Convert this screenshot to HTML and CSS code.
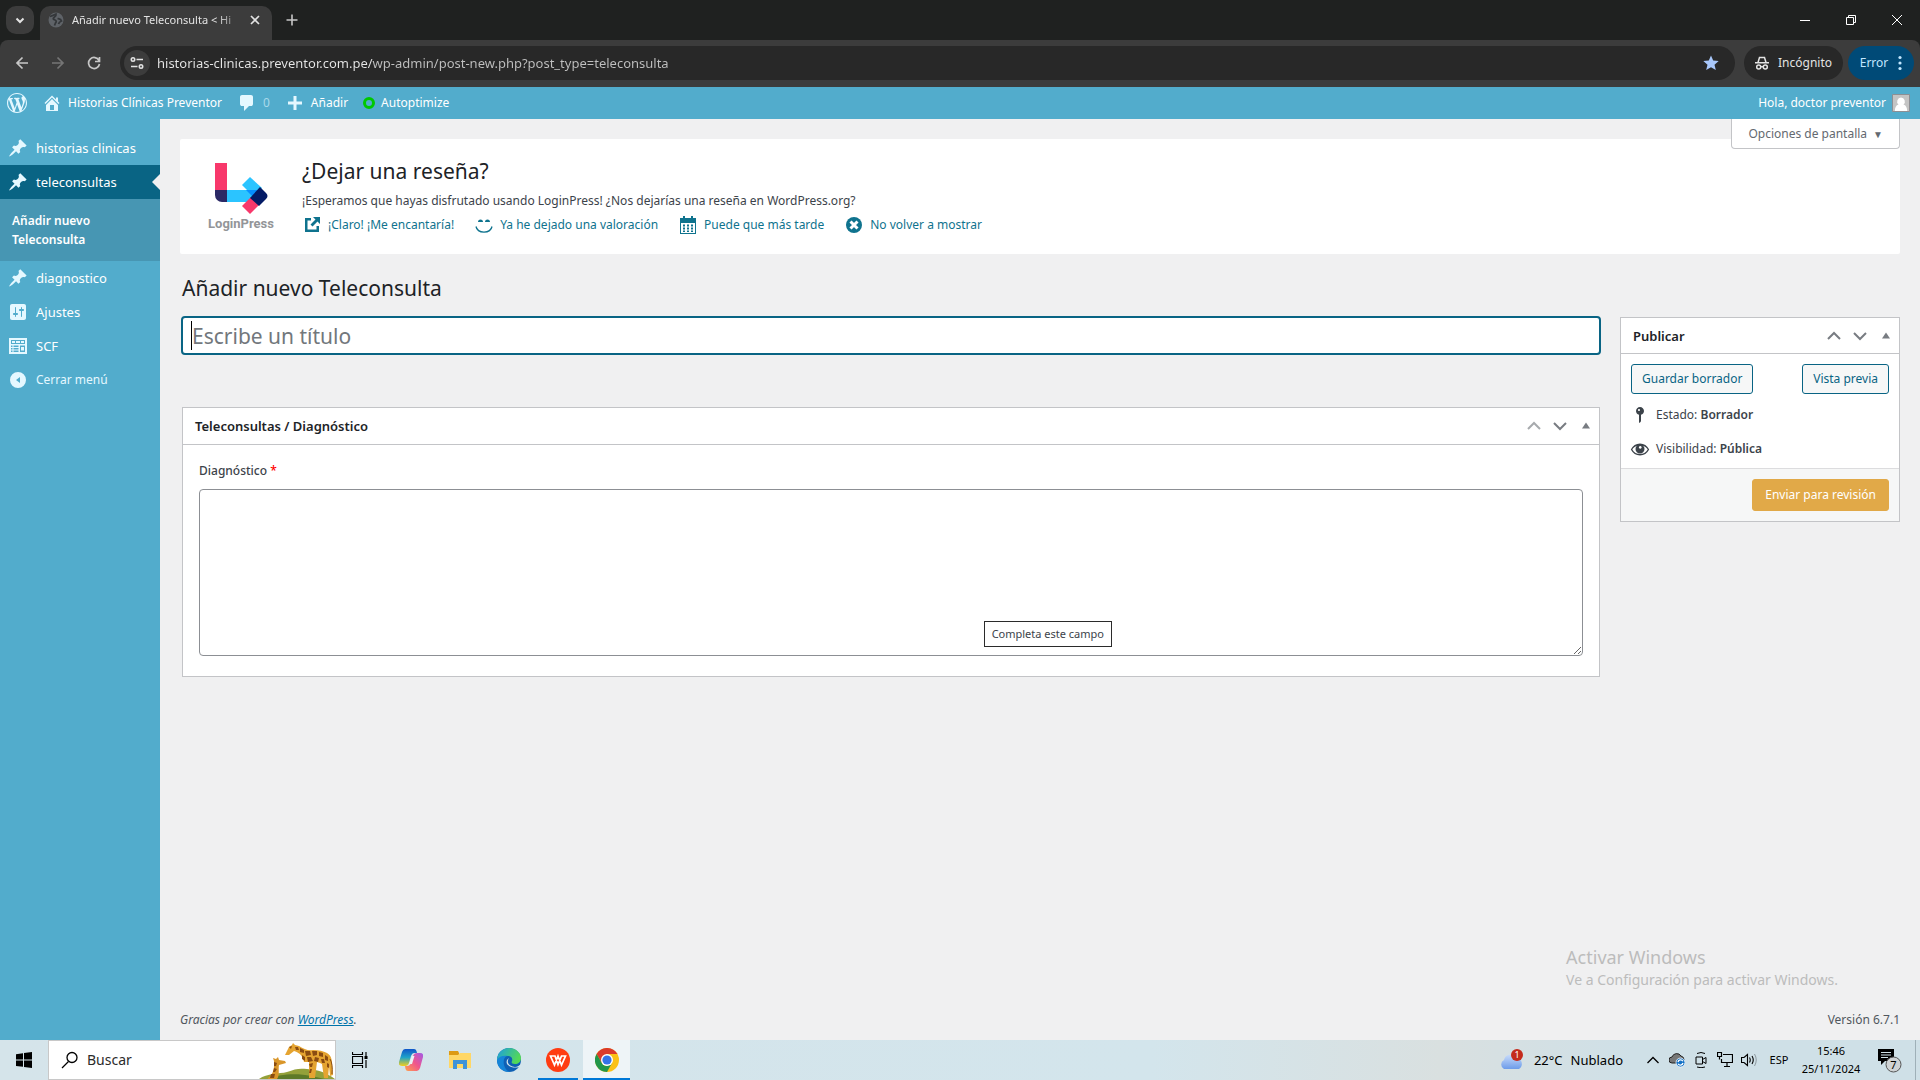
FILE: index.html
```html
<!DOCTYPE html>
<html lang="es">
<head>
    <meta charset="UTF-8">
    <meta name="viewport" content="width=device-width, initial-scale=1.0">
    <title>Añadir nuevo Teleconsulta</title>
    <link rel="stylesheet" href="styles.css">
</head>
<body>
    <!-- shared icons -->
    <svg class="sprite" aria-hidden="true">
        <symbol id="pin" viewBox="0 0 20 20"><path d="M10.44 3.02l1.82-1.82 6.36 6.35-1.83 1.82c-1.05-.68-2.48-.57-3.41.36l-.75.75c-.92.93-1.04 2.35-.35 3.41l-1.83 1.82-2.41-2.41-2.8 2.79c-.42.42-3.38 2.71-3.8 2.29s1.86-3.39 2.28-3.81l2.79-2.79L4.1 9.36l1.83-1.82c1.05.69 2.48.57 3.4-.36l.75-.75c.93-.92 1.05-2.35.36-3.41z"/></symbol>
        <symbol id="up" viewBox="0 0 20 20"><path d="M4 13l6-6 6 6" fill="none" stroke="currentColor" stroke-width="2"/></symbol>
        <symbol id="down" viewBox="0 0 20 20"><path d="M4 7l6 6 6-6" fill="none" stroke="currentColor" stroke-width="2"/></symbol>
        <symbol id="toggle" viewBox="0 0 20 20"><path d="M6 12.500L10 6.500l4 6z"/></symbol>
    </svg>

    <header class="browser">
        <div class="tabs">
            <button class="tab-search" aria-label="Buscar pestañas"><svg width="12" height="12" viewBox="0 0 12 12"><path d="M2.500 4.500L6 8l3.500-3.500" fill="none" stroke="currentColor" stroke-width="2"/></svg></button>
            <div class="tab">
                <svg width="16" height="16" viewBox="0 0 16 16"><circle cx="8" cy="8" r="7.500" fill="#5f6368"/><path d="M2 4.500c2-.5 4-1.500 6-2.500.5 2-.5 2.500-2 3.500s-.5 2 1 2.500 1.500 2 .5 3l-1 2.500M9.500 6.500c2 .5 3.500.5 4 2.500-1.500.5-2.500 1-3 3" fill="none" stroke="#34373a" stroke-width="1.800"/></svg>
                <span class="tab-title">Añadir nuevo Teleconsulta &lt; Hi</span>
                <button class="tab-close" aria-label="Cerrar"><svg width="10" height="10" viewBox="0 0 10 10"><path d="M1 1l8 8M9 1L1 9" stroke="currentColor" stroke-width="1.700"/></svg></button>
            </div>
            <button class="tab-new" aria-label="Nueva pestaña"><svg width="12" height="12" viewBox="0 0 12 12"><path d="M6 .5v11M.5 6h11" stroke="currentColor" stroke-width="1.600"/></svg></button>
            <div class="window-buttons">
                <button aria-label="Minimizar"><svg width="10" height="10" viewBox="0 0 10 10"><path d="M0 5.500h10" stroke="#fff"/></svg></button>
                <button aria-label="Restaurar"><svg width="10" height="10" viewBox="0 0 10 10"><path d="M.5 2.500h7v7h-7zM2.500 2.500v-2h7v7h-2" fill="none" stroke="#fff"/></svg></button>
                <button aria-label="Cerrar ventana"><svg width="10" height="10" viewBox="0 0 10 10"><path d="M0 0l10 10M10 0L0 10" stroke="#fff"/></svg></button>
            </div>
        </div>
        <div class="toolbar">
            <button class="nav-button" aria-label="Atrás"><svg width="14" height="14" viewBox="0 0 14 14"><path d="M7.500 1.500L2 7l5.500 5.500M2 7h11" fill="none" stroke="currentColor" stroke-width="1.700"/></svg></button>
            <button class="nav-button off" aria-label="Adelante"><svg width="14" height="14" viewBox="0 0 14 14"><path d="M6.500 1.500L12 7l-5.500 5.500M12 7H1" fill="none" stroke="currentColor" stroke-width="1.700"/></svg></button>
            <button class="nav-button" aria-label="Recargar"><svg width="14" height="14" viewBox="0 0 14 14"><path d="M12 4.500A5.500 5.500 0 1 0 12.500 8M12.500 1v4.500H8" fill="none" stroke="currentColor" stroke-width="1.700"/></svg></button>
            <div class="omnibox">
                <button class="site-info" aria-label="Información del sitio"><svg width="14" height="14" viewBox="0 0 14 14" fill="none" stroke="#e3e3e3" stroke-width="1.600"><circle cx="3" cy="3.500" r="1.700"/><path d="M6.500 3.500H13M1 10.500h6.500"/><circle cx="11" cy="10.500" r="1.700"/></svg></button>
                <input class="url" type="text" aria-label="Dirección" value="historias-clinicas.preventor.com.pe/wp-admin/post-new.php?post_type=teleconsulta">
                <button class="star" aria-label="Favorito"><svg width="16" height="16" viewBox="0 0 16 16"><path d="M8 .5l2.200 5.100 5.500.5-4.200 3.600 1.300 5.400L8 12.200l-4.800 2.900 1.300-5.400L.3 6.100l5.500-.5z" fill="#a8c7fa"/></svg></button>
            </div>
            <button class="pill incognito"><svg width="14" height="14" viewBox="0 0 14 14" fill="none" stroke="#e3e3e3" stroke-width="1.500"><path d="M0 6.800h14M3 6.500L4.500 1.500h5L11 6.500"/><circle cx="3.700" cy="11" r="2"/><circle cx="10.300" cy="11" r="2"/><path d="M5.700 10.700h2.600"/></svg>Incógnito</button>
            <button class="pill error">Error<svg width="4" height="16" viewBox="0 0 4 16" fill="#c2e7ff"><circle cx="2" cy="2.500" r="1.600"/><circle cx="2" cy="8" r="1.600"/><circle cx="2" cy="13.500" r="1.600"/></svg></button>
        </div>
    </header>

    <nav class="admin-bar">
        <a href="#" aria-label="WordPress"><svg width="20" height="20" viewBox="0 0 20 20"><path d="M20 10c0-5.510-4.490-10-10-10C4.480 0 0 4.490 0 10c0 5.520 4.480 10 10 10 5.510 0 10-4.480 10-10zM7.780 15.370L4.370 6.220c.55-.02 1.170-.08 1.170-.08.5-.06.44-1.130-.06-1.110 0 0-1.450.11-2.370.11-.18 0-.37 0-.58-.01C4.120 2.690 6.870 1.110 10 1.110c2.330 0 4.450.87 6.050 2.340-.68-.11-1.650.39-1.650 1.580 0 .74.45 1.360.9 2.100.35.61.55 1.360.55 2.460 0 1.490-1.400 5-1.400 5l-3.030-8.370c.54-.02.82-.17.82-.17.5-.05.44-1.250-.06-1.220 0 0-1.440.12-2.380.12-.87 0-2.330-.12-2.330-.12-.5-.03-.56 1.200-.06 1.220l.92.08 1.260 3.410zM17.410 10c.24-.64.74-1.870.43-4.250.7 1.290 1.050 2.710 1.050 4.250 0 3.290-1.730 6.240-4.400 7.780.97-2.590 1.940-5.200 2.920-7.780zM6.100 18.090C3.120 16.650 1.110 13.530 1.110 10c0-1.300.23-2.480.72-3.590C3.250 10.300 4.670 14.200 6.100 18.090zm4.030-6.630l2.580 6.980c-.86.29-1.760.45-2.710.45-.79 0-1.570-.11-2.290-.33.81-2.380 1.620-4.740 2.420-7.100z"/></svg></a>
        <a href="#" class="site-name"><svg width="20" height="20" viewBox="0 0 20 20"><path d="M16 8.500l1.530 1.530-1.060 1.060L10 4.600l-6.470 6.490-1.060-1.060L10 2.500l4 4v-2h2v4zm-6-2.460l6 5.990V18H4v-5.970zM12 17v-5H8v5h4z"/></svg>Historias Clínicas Preventor</a>
        <a href="#" class="comments"><svg width="20" height="20" viewBox="0 0 20 20"><path d="M5 2h9q.82 0 1.410.59T16 4v7q0 .82-.59 1.410T14 13h-2l-5 5v-5H5q-.82 0-1.410-.59T3 11V4q0-.82.59-1.410T5 2z"/></svg><span>0</span></a>
        <a href="#"><svg width="20" height="20" viewBox="0 0 20 20"><path d="M17 8.500v3h-5.500V17h-3v-5.500H3v-3h5.500V3h3v5.500z"/></svg>Añadir</a>
        <a href="#" class="autoptimize"><i class="ring"></i>Autoptimize</a>
        <a href="#" class="account">Hola, doctor preventor<svg width="18" height="18" viewBox="0 0 18 18"><path d="M.5.5h17v17H.5z" fill="#c4c4c4" stroke="#8c8f94"/><path d="M9 3.500a4 4 0 0 1 2.500 7c2.500.7 3.500 3 3.700 6.500H2.800c.2-3.500 1.200-5.800 3.700-6.500A4 4 0 0 1 9 3.500z" fill="#fff"/></svg></a>
    </nav>

    <div class="admin">
        <aside class="menu">
            <a href="#"><svg><use href="#pin"/></svg>historias clinicas</a>
            <a href="#" class="current"><svg><use href="#pin"/></svg>teleconsultas</a>
            <div class="submenu"><a href="#">Añadir nuevo Teleconsulta</a></div>
            <a href="#"><svg><use href="#pin"/></svg>diagnostico</a>
            <a href="#"><svg viewBox="0 0 20 20"><path d="M18 16V4c0-1.100-.9-2-2-2H4c-1.100 0-2 .9-2 2v12c0 1.100.9 2 2 2h12c1.100 0 2-.9 2-2zM8 11h1c.55 0 1 .45 1 1s-.45 1-1 1H8v1.500c0 .28-.22.5-.5.5s-.5-.22-.5-.5V13H6c-.55 0-1-.45-1-1s.45-1 1-1h1V5.500c0-.28.22-.5.5-.5s.5.22.5.5V11zm5-2h-1c-.55 0-1-.45-1-1s.45-1 1-1h1V5.500c0-.28.22-.5.5-.5s.5.22.5.5V7h1c.55 0 1 .45 1 1s-.45 1-1 1h-1v5.500c0 .28-.22.5-.5.5s-.5-.22-.5-.5V9z"/></svg>Ajustes</a>
            <a href="#"><svg viewBox="0 0 20 20"><path fill-rule="evenodd" d="M1 2h18v16H1zM3 4v4h14V4zM4 5h3v2H4zm4 0h4v2H8zm5 0h3v2h-3zM3 9.500v1.500h1.500V9.500zm2.500 0V11h5V9.500zM3 12v1.500h1.500V12zm2.500 0v1.500h5V12zM3 14.500V16h1.500v-1.500zm2.500 0V16h5v-1.500zM12 9.500V16h5V9.500zM13 11h3v3.500h-3z"/></svg>SCF</a>
            <a href="#" class="collapse"><svg viewBox="0 0 20 20"><path fill-rule="evenodd" d="M10 2a8 8 0 1 1 0 16 8 8 0 0 1 0-16zm2 5l-4 3 4 3z"/></svg>Cerrar menú</a>
        </aside>

        <main class="content">
            <button class="screen-options">Opciones de pantalla<span>▼</span></button>

            <section class="notice">
                <div class="logo">
                    <svg width="54" height="54" viewBox="0 0 54 54">
                        <path d="M1 1h12v28H1z" fill="#f8386b"/>
                        <path d="M12 28h30v12H12z" fill="#2bc4ff"/>
                        <path d="M1 28h12v12H8a7 7 0 0 1-7-7z" fill="#2b2965"/>
                        <path d="M36 15l12 11-8 9-12-12z" fill="#2bc4ff"/>
                        <path d="M32 28h12l-5 7z" fill="#068fff"/>
                        <path d="M28 44l9-9 8 8-9 9z" fill="#f8386b"/>
                        <path d="M46 25l6 6q3 3 0 6l-7 7-9-8z" fill="#041b66"/>
                    </svg>
                    <strong>LoginPress</strong>
                </div>
                <div class="notice-text">
                    <h2>¿Dejar una reseña?</h2>
                    <p>¡Esperamos que hayas disfrutado usando LoginPress! ¿Nos dejarías una reseña en WordPress.org?</p>
                    <div class="notice-links">
                        <a href="#"><svg viewBox="0 0 20 20"><path d="M9 3H3v14h14v-6h-2.500v3.500h-9v-9H9zM11 2h7v7l-2.500-2.500-5 5-2-2 5-5z"/></svg>¡Claro! ¡Me encantaría!</a>
                        <a href="#"><svg viewBox="0 0 20 20"><path d="M4 7q0-2.500 2.500-2.500T9 7zM11 7q0-2.500 2.500-2.500T16 7z"/><path d="M2 11.500c1.500 7.500 14.500 7.500 16 0" fill="none" stroke="currentColor" stroke-width="1.300"/></svg>Ya he dejado una valoración</a>
                        <a href="#"><svg viewBox="0 0 20 20"><path fill-rule="evenodd" d="M2 3h3V1h2v2h6V1h2v2h3v16H2zM3 8v10h14V8zM5 9.500h2v2H5zm4 0h2v2H9zm4 0h2v2h-2zM5 12.500h2v2H5zm4 0h2v2H9zm4 0h2v2h-2zM5 15.500h2v1.500H5zm4 0h2v1.500H9zm4 0h2v1.500h-2z"/></svg>Puede que más tarde</a>
                        <a href="#"><svg viewBox="0 0 20 20"><circle cx="10" cy="10" r="8"/><path d="M6.500 6.500l7 7M13.500 6.500l-7 7" stroke="#fff" stroke-width="3"/></svg>No volver a mostrar</a>
                    </div>
                </div>
            </section>

            <h1>Añadir nuevo Teleconsulta</h1>

            <form class="editor">
                <div class="main-column">
                    <div class="title-wrap">
                        <input id="title" class="title" type="text" placeholder="Escribe un título" aria-label="Título">
                        <i class="caret"></i>
                    </div>
                    <section class="postbox">
                        <header>
                            <h2>Teleconsultas / Diagnóstico</h2>
                            <button type="button" class="dim" aria-label="Subir"><svg><use href="#up"/></svg></button>
                            <button type="button" aria-label="Bajar"><svg><use href="#down"/></svg></button>
                            <button type="button" aria-label="Alternar panel"><svg><use href="#toggle"/></svg></button>
                        </header>
                        <div class="fields">
                            <label for="diagnostico">Diagnóstico <span>*</span></label>
                            <textarea id="diagnostico"></textarea>
                            <div class="tooltip">Completa este campo</div>
                        </div>
                    </section>
                </div>

                <section class="postbox publish">
                    <header>
                        <h2>Publicar</h2>
                        <button type="button" aria-label="Subir"><svg><use href="#up"/></svg></button>
                        <button type="button" aria-label="Bajar"><svg><use href="#down"/></svg></button>
                        <button type="button" aria-label="Alternar panel"><svg><use href="#toggle"/></svg></button>
                    </header>
                    <div class="publish-buttons">
                        <button type="button" class="button">Guardar borrador</button>
                        <button type="button" class="button">Vista previa</button>
                    </div>
                    <p><svg viewBox="0 0 20 20"><path d="M14 6c0 1.860-1.280 3.410-3 3.860V16c0 1-2 2-2 2V9.860c-1.720-.45-3-2-3-3.860 0-2.210 1.790-4 4-4s4 1.790 4 4zM8 5c0 .55.45 1 1 1s1-.45 1-1-.45-1-1-1-1 .45-1 1z"/></svg>Estado: <b>Borrador</b></p>
                    <p><svg viewBox="0 0 20 20"><path fill-rule="evenodd" d="M10 4.500c4 0 7.200 2.100 9.200 6-2 3.900-5.200 6-9.200 6s-7.200-2.100-9.200-6c2-3.900 5.200-6 9.200-6zM2.300 10.500C4 13.500 6.800 15 10 15s6-1.500 7.700-4.500C16.700 8.800 15 7.500 13.200 6.800a4.500 4.500 0 1 1-6.400 0C5 7.500 3.300 8.800 2.300 10.500zM10.200 7a1.400 1.400 0 1 0 .1 0z"/></svg>Visibilidad: <b>Pública</b></p>
                    <footer><button type="button" class="button primary">Enviar para revisión</button></footer>
                </section>
            </form>

            <footer class="page-footer">
                <em>Gracias por crear con <a href="#">WordPress</a>.</em>
                <span>Versión 6.7.1</span>
            </footer>

            <div class="watermark">
                <strong>Activar Windows</strong>
                <span>Ve a Configuración para activar Windows.</span>
            </div>
        </main>
    </div>

    <footer class="taskbar">
        <button class="start" aria-label="Inicio"><svg width="16" height="16" viewBox="0 0 16 16"><path d="M0 2.200L7 1.200V7.600H0zM8 1.100L16 0v7.600H8zM0 8.500h7v6.300L0 13.900zM8 8.500h8V16l-8-1.100z"/></svg></button>
        <div class="search">
            <svg width="18" height="18" viewBox="0 0 18 18"><circle cx="11" cy="6.500" r="5" fill="none" stroke="#000" stroke-width="1.300"/><path d="M7.500 10.500L1 17" stroke="#000" stroke-width="1.300"/></svg>
            <input type="text" placeholder="Buscar" aria-label="Buscar">
            <!-- giraffes on a hill -->
            <svg class="giraffes" width="76" height="36" viewBox="0 0 76 36">
                <path d="M0 36c8-6 20-5 28-7 8-3 12-4 20-3 12 1 18 3 28 10z" fill="#94a13a"/>
                <path d="M8 36c12-5 30-6 44-3l14 3z" fill="#5d7a28"/>
                <path d="M8 36c5-4 7-8 7-13l0-5-1-3 3 1 2-2 1 3 6 1 1 2-7 2c-1 5 1 10-2 14z" fill="#d9962a"/>
                <path d="M26 12l4-8 3-2 1-2 2 2 4 1c5 3 9 5 14 4 6 0 10 1 14 3 5 3 5 8 5 12l1 10-3 1-1-10-1 12h-4l-2-14-2-1-3-1-2 16h-6l0-16-5 0c-1-6-4-9-10-11l-5 4z" fill="#e5a431"/>
                <g fill="#8a4c12"><path d="M36 4l3 0 1 3-3 0zM41 5l4 2 0 3-4-1zM46 8l5 0 1 4-5 1zM43 12l3 2 0 4-3-2zM53 8l5 0 0 4-4 1zM60 9l4 1 0 4-4-1zM66 12l3 2 0 4-3-1zM48 14l4 0 2 4-5 1zM56 14l4 1-1 4-4-1zM62 16l3 0 1 4-3 0zM50 21l4-1-1 4-2 0zM51 26l2 0-1 4-2 0zM68 20l2 1 0 4-2-1zM15 19l3 1-1 3-2 0zM15 25l3 1-2 3-2 0zM12 31l4 0-1 4-4 0zM30 4l3-1-1 3z"/><path d="M71 16q3 5 2 15" fill="none" stroke="#8a4c12"/></g>
            </svg>
        </div>
        <button class="task-view" aria-label="Vista de tareas"><svg width="16" height="16" viewBox="0 0 16 16"><path d="M.5 0v2.500h10V0M.5 4.500h10v7H.5zM.5 16v-2.500h10V16M14 0v4M14 8v8" fill="none" stroke="#000" stroke-width="1.200"/><path d="M12.500 4h3v3h-3z"/></svg></button>
        <div class="apps">
            <button aria-label="Copilot"><svg width="24" height="22" viewBox="0 0 24 22">
                <defs>
                    <linearGradient id="cop1" x1="0" y1="0" x2="0" y2="1"><stop offset="0" stop-color="#0f56c9"/><stop offset=".5" stop-color="#1fa3c8"/><stop offset="1" stop-color="#f5cf1c"/></linearGradient>
                    <linearGradient id="cop2" x1="1" y1="0" x2="0" y2="1"><stop offset="0" stop-color="#a25ae8"/><stop offset=".5" stop-color="#f0568c"/><stop offset="1" stop-color="#ffa24d"/></linearGradient>
                </defs>
                <path d="M6 0h9q2 0 2.500 2l.5 2h-3q-2 0-3 3l-2 7q-1 3-4 3H3q-4 0-3-4l3-10q1-3 3-3z" fill="url(#cop1)"/>
                <path d="M18 22H9q-2 0-2.500-2L6 17h3q2 0 3-3l2-7q1-3 4-3h3q4 0 3 4l-3 11q-1 3-3 3z" fill="url(#cop2)"/>
                <path d="M13 7h2.500l-2.500 8h-3z" fill="#eaf2f5"/>
            </svg></button>
            <button aria-label="Explorador"><svg width="22" height="18" viewBox="0 0 22 18"><path d="M0 0h9l1 2v4H0z" fill="#dd9a13"/><path d="M0 4h9l2-2h11v15H0z" fill="#ffd766"/><path d="M4 18V9h14v9h-4v-5H8v5z" fill="#3f93d8"/></svg></button>
            <button aria-label="Edge"><svg width="24" height="24" viewBox="0 0 24 24">
                <defs><linearGradient id="edge" x1="0" y1="0" x2="1" y2=".4"><stop offset="0" stop-color="#1b9de2"/><stop offset="1" stop-color="#53d957"/></linearGradient></defs>
                <circle cx="12" cy="12" r="12" fill="#0f60b4"/>
                <path d="M0 11C1 4 6 0 12 0c7 0 12 5 12 10 0 4-3 6-6 6-3 0-4-1-3-3 1-3-1-5-4-5C6 8 2 9 0 13z" fill="url(#edge)"/>
                <path d="M11 8c-6 0-6 13 2 16C5 24 0 19 0 12c2-4 7-5 11-4z" fill="#1585d8"/>
                <path d="M12 10c-3 4 0 9 6 9 2 0 4-1 6-3-1 3-3 5-5 6 2-1 3-2 3-3-3 1-8 1-11-2-2-2-2-5 1-7z" fill="#d5e4ea"/>
            </svg></button>
            <button class="open" aria-label="WPS Office"><svg width="24" height="24" viewBox="0 0 24 24"><circle cx="12" cy="12" r="12" fill="#ff3c12"/><path d="M4.500 8H9l3 8.500L15.500 8h4l-4 9-3.500-9-3.500 9z" fill="none" stroke="#fff" stroke-width="1.700"/></svg></button>
            <button class="active" aria-label="Chrome"><svg width="24" height="24" viewBox="0 0 24 24"><circle cx="12" cy="12" r="12" fill="#fbc116"/><path d="M1.600 6A12 12 0 0 1 22.400 6H12l-5.200 9z" fill="#db3b2c"/><path d="M1.600 6l5.200 9a6 6 0 0 0 5.200 3l5-3-5 9A12 12 0 0 1 1.600 6z" fill="#219649"/><circle cx="12" cy="12" r="6" fill="#fff"/><circle cx="12" cy="12" r="4.600" fill="#3473e6"/></svg></button>
        </div>
        <div class="tray">
            <button class="weather"><svg width="27" height="22" viewBox="0 0 27 22"><defs><linearGradient id="sky" x1="0" y1="0" x2="0" y2="1"><stop offset="0" stop-color="#c9dcfa"/><stop offset="1" stop-color="#6d9cea"/></linearGradient></defs><path d="M5 20a5 5 0 0 1 0-9 7 7 0 0 1 13-2 6 6 0 0 1 2 11z" fill="url(#sky)"/><circle cx="18" cy="6" r="6" fill="#c42b1c"/><text x="18" y="9" text-anchor="middle" fill="#fff" font-size="9">1</text></svg><span>22°C</span><span>Nublado</span></button>
            <button class="chevron" aria-label="Iconos ocultos"><svg width="12" height="8" viewBox="0 0 12 8"><path d="M.5 7L6 1.500 11.500 7" fill="none" stroke="#000" stroke-width="1.300"/></svg></button>
            <button aria-label="OneDrive"><svg width="16" height="16" viewBox="0 0 16 16"><path d="M3 11a3 3 0 0 1 0-6 5 5 0 0 1 9-1 4 4 0 0 1 3 4l-4 3z" fill="#777" stroke="#222"/><circle cx="11.500" cy="10.500" r="4.500" fill="#1572c6" stroke="#fff" stroke-width=".8"/><path d="M9 10a2.700 2.700 0 0 1 5-.8M14 11a2.700 2.700 0 0 1-5 .8" fill="none" stroke="#fff" stroke-width="1.300"/></svg></button>
            <button aria-label="Cámara"><svg width="16" height="16" viewBox="0 0 16 16"><path d="M3 5h6.500v7H3zM9.500 7.500L13 5.500v6L9.500 9.500M4 1.500q4-2 8 0M4 15q4 1.500 8 0" fill="none" stroke="#000"/></svg></button>
            <button aria-label="Red"><svg width="16" height="16" viewBox="0 0 16 16"><path d="M6 2.500h9.500v8h-11V7M7 14.500h6M10 10.500v4M.5.500h4v4h-4zM2.500 4.500v3" fill="none" stroke="#000" stroke-width="1.200"/></svg></button>
            <button aria-label="Volumen"><svg width="16" height="16" viewBox="0 0 16 16"><path d="M.5 5.500H3l3.500-3v11L3 10.500H.5zM8.500 5.500q1.500 2.500 0 5M11 4q2.500 4 0 8" fill="none" stroke="#000" stroke-width="1.100"/><path d="M13.500 2q3.500 6 0 12" fill="none" stroke="#8e9aa0"/></svg></button>
            <button class="lang">ESP</button>
            <button class="clock"><span>15:46</span><span>25/11/2024</span></button>
            <button class="alerts" aria-label="Notificaciones"><svg width="26" height="26" viewBox="0 0 26 26"><path d="M1 2h16v12H8l-4 4v-4H1z"/><path d="M4 5.500h10M4 8h10M4 10.500h7" stroke="#d0dfe6" stroke-width="1"/><circle cx="16.500" cy="17.500" r="7.500" fill="#cfd2d4" stroke="#555"/><text x="16.500" y="21.500" text-anchor="middle" font-size="11">7</text></svg></button>
            <button class="show-desktop" aria-label="Mostrar escritorio"></button>
        </div>
    </footer>
</body>
</html>
```
FILE: styles.css
```css
* {
    box-sizing: border-box;
}

body {
    font-family: "Segoe UI", "Noto Sans", "Open Sans", sans-serif;
    font-size: 12px;
    line-height: 20px;
    margin: 0;
    min-height: 100vh;
    display: flex;
    flex-direction: column;
    background: #f0f0f1;
    color: #3c434a;
}

button,
input,
textarea {
    font: inherit;
    color: inherit;
    border: none;
    background: none;
    padding: 0;
    margin: 0;
}

button {
    display: flex;
    align-items: center;
    justify-content: center;
    cursor: pointer;
}

h1, h2, p {
    margin: 0;
}

svg {
    flex: none;
}

.sprite {
    position: absolute;
    width: 0;
    height: 0;
}

/* Browser */

.browser {
    background: #1f2120;
    color: #e3e3e3;
}

.tabs {
    display: flex;
    align-items: center;
    height: 40px;
    padding-left: 6px;
}

.tab-search {
    width: 28px;
    height: 28px;
    border-radius: 10px;
    background: #3c3c3c;
}

.tab {
    display: flex;
    align-items: center;
    align-self: flex-end;
    width: 232px;
    height: 34px;
    margin-left: 6px;
    padding: 0 8px 6px;
    border-radius: 10px 10px 0 0;
    background: #3c3c3c;
}

.tab-title {
    flex: 1;
    margin-left: 8px;
    white-space: nowrap;
    font-size: 11px;
    mask-image: linear-gradient(90deg, #000 144px, transparent 174px);
}

.tab-close {
    width: 18px;
    height: 18px;
}

.tab-new {
    width: 28px;
    height: 28px;
    margin-left: 6px;
    color: #c7c7c7;
}

.window-buttons {
    display: flex;
    margin-left: auto;
}

.window-buttons button {
    width: 46px;
    height: 40px;
}

.toolbar {
    display: flex;
    align-items: center;
    height: 47px;
    padding: 0 6px 2px 4px;
    border-radius: 8px 8px 0 0;
    background: #3c3c3c;
}

.nav-button {
    width: 36px;
    height: 34px;
    color: #c7c7c7;
}

.off {
    color: #757575;
}

.omnibox {
    flex: 1;
    display: flex;
    align-items: center;
    height: 34px;
    margin: 0 9px 0 8px;
    padding: 0 16px 0 4px;
    border-radius: 17px;
    background: #282828;
}

.site-info {
    width: 26px;
    height: 26px;
    border-radius: 50%;
    background: #3c3c3c;
}

.url {
    flex: 1;
    margin-left: 7px;
    font-size: 13px;
    color: transparent;
    background: linear-gradient(90deg, #e8e8e8 216px, #c0c0c0 216px);
    background-clip: text;
}

.pill {
    height: 34px;
    border-radius: 17px;
}

.incognito {
    width: 99px;
    gap: 9px;
    background: #282828;
}

.error {
    width: 66px;
    gap: 10px;
    margin-left: 5px;
    background: #004a77;
    color: #c2e7ff;
}

/* Admin bar */

.admin-bar {
    display: flex;
    align-items: center;
    height: 32px;
    padding: 0 10px 0 7px;
    background: #52accc;
}

.admin-bar a {
    display: flex;
    align-items: center;
    gap: 6px;
    margin-right: 15px;
    color: #fff;
    text-decoration: none;
}

.admin-bar svg {
    fill: #e5f8ff;
}

.admin-bar .comments span {
    color: #a9d9ea;
}

.ring {
    width: 12px;
    height: 12px;
    border: 3px solid #00c800;
    border-radius: 50%;
}

.admin-bar .account {
    margin: 0 0 0 auto;
}

/* Side menu */

.admin {
    flex: 1;
    display: flex;
}

.menu {
    width: 160px;
    padding-top: 12px;
    background: #52accc;
    font-size: 13px;
}

.menu > a {
    position: relative;
    display: flex;
    align-items: center;
    gap: 8px;
    height: 34px;
    padding-left: 8px;
    color: #fff;
    text-decoration: none;
}

.menu svg {
    width: 20px;
    height: 20px;
    fill: #e5f8ff;
}

.menu .current {
    background: #096484;
}

.menu .current::after {
    content: "";
    position: absolute;
    right: 0;
    top: 9px;
    border: 8px solid transparent;
    border-right-color: #f0f0f1;
    border-left: none;
}

.menu .collapse {
    font-size: 12px;
    color: #e5f8ff;
}

.submenu {
    padding: 12px;
    background: #4796b3;
    font-size: 12px;
    font-weight: 600;
    line-height: 19px;
}

.submenu a {
    display: block;
    color: #fff;
    text-decoration: none;
}

/* Content */

.content {
    position: relative;
    flex: 1;
    display: flex;
    flex-direction: column;
    padding: 20px 20px 10px;
}

.screen-options {
    position: absolute;
    top: 0;
    right: 20px;
    height: 30px;
    padding: 0 16px;
    gap: 6px;
    border: 1px solid #c3c4c7;
    border-top: none;
    border-radius: 0 0 4px 4px;
    background: #fff;
    color: #646970;
}

.screen-options span {
    font-size: 10px;
}

.notice {
    display: flex;
    align-items: center;
    height: 115px;
    padding: 0 26px;
    border-radius: 2px;
    background: #fff;
}

.logo {
    display: flex;
    flex-direction: column;
    align-items: center;
    width: 70px;
    margin-right: 26px;
}

.logo strong {
    font-family: Roboto, sans-serif;
    font-size: 13px;
    line-height: 16px;
    color: #939598;
}

.notice-text h2,
h1 {
    font-size: 21px;
    font-weight: 400;
    line-height: 32px;
    color: #1d2327;
}

.notice-text h2 {
    margin-bottom: 2px;
}

.notice-text p {
    line-height: 24px;
}

.notice-links {
    display: flex;
    gap: 20px;
    padding-bottom: 2px;
    line-height: 24px;
}

.notice-links a {
    display: flex;
    align-items: center;
    gap: 6px;
    color: #0f738e;
    text-decoration: none;
}

.notice-links svg {
    width: 20px;
    height: 20px;
    fill: currentColor;
}

h1 {
    margin: 18px 0 12px 2px;
}

.editor {
    display: flex;
    align-items: flex-start;
    gap: 20px;
    padding-left: 2px;
}

.main-column {
    flex: 1;
}

.title-wrap {
    position: relative;
    margin: 0 -1px 52px;
}

.title {
    display: block;
    width: 100%;
    height: 39px;
    padding: 0 9px;
    border: 2px solid #096484;
    border-radius: 4px;
    background: #fff;
    font-size: 21px;
}

.title::placeholder {
    color: #72777c;
    opacity: 1;
}

.caret {
    position: absolute;
    left: 10px;
    top: 5px;
    width: 1px;
    height: 29px;
    background: #000;
}

.postbox {
    border: 1px solid #c3c4c7;
    background: #fff;
}

.postbox header {
    display: flex;
    height: 37px;
    border-bottom: 1px solid #c3c4c7;
}

.postbox h2 {
    flex: 1;
    padding-left: 12px;
    font-size: 13px;
    font-weight: 600;
    line-height: 36px;
    color: #1d2327;
}

.postbox header button {
    width: 26px;
    color: #787c82;
}

.postbox header .dim {
    color: #a7aaad;
}

.postbox header svg {
    width: 20px;
    height: 20px;
    fill: currentColor;
}

.fields {
    position: relative;
    padding: 16px 16px 20px;
}

.fields label {
    display: block;
    margin-bottom: 8px;
    font-weight: 500;
}

.fields label span {
    color: #f00;
}

textarea {
    display: block;
    width: 100%;
    height: 167px;
    border: 1px solid #8c8f94;
    border-radius: 4px;
    resize: vertical;
}

.tooltip {
    position: absolute;
    right: 487px;
    bottom: 29px;
    padding: 2px 7px;
    border: 1px solid #2b2b2b;
    background: #fff;
    font-size: 11px;
    line-height: 20px;
}

.publish {
    width: 280px;
    margin-top: 1px;
}

.publish header {
    height: 36px;
}

.publish-buttons {
    display: flex;
    justify-content: space-between;
    padding: 10px 10px 4px;
}

.button {
    height: 30px;
    padding: 0 10px;
    border: 1px solid #096484;
    border-radius: 3px;
    background: #f6f7f7;
    color: #096484;
}

.publish p {
    display: flex;
    align-items: center;
    height: 34px;
    padding-left: 9px;
    white-space: pre;
}

.publish p svg {
    width: 20px;
    height: 20px;
    margin-right: 6px;
    fill: #3c434a;
}

b {
    font-weight: 600;
}

.publish footer {
    display: flex;
    justify-content: flex-end;
    padding: 10px;
    margin-top: 2px;
    border-top: 1px solid #dcdcde;
    background: #f6f7f7;
}

.primary {
    height: 32px;
    padding: 0 12px;
    border-color: #e1a948;
    background: #e1a948;
    color: #fff;
}

.page-footer {
    display: flex;
    justify-content: space-between;
    margin-top: auto;
    color: #50575e;
}

.page-footer a {
    color: #0073aa;
}

.watermark {
    position: absolute;
    right: 82px;
    bottom: 50px;
    display: flex;
    flex-direction: column;
    color: #bcbcbc;
    font-size: 14px;
    line-height: 20px;
}

.watermark strong {
    font-size: 18px;
    font-weight: 400;
    line-height: 26px;
}

/* Taskbar */

.taskbar {
    display: flex;
    height: 40px;
    background: linear-gradient(90deg, #d5e4ea, #d3e5ec 60%, #d9e0e0 75%, #cfe0e7 85%);
    color: #000;
}

.start,
.task-view {
    width: 48px;
}

.search {
    display: flex;
    align-items: center;
    width: 288px;
    padding-left: 12px;
    border: 1px solid #c8c8c8;
    background: #fff;
}

.search input {
    flex: 1;
    min-width: 0;
    margin-left: 8px;
    font-size: 14px;
}

.search input::placeholder {
    color: #2b2b2b;
}

.giraffes {
    align-self: flex-end;
}

.apps {
    display: flex;
    gap: 2px;
    margin-left: 3px;
}

.apps button {
    width: 47px;
}

.apps .open {
    background: linear-gradient(#0078d7, #0078d7) bottom / 40px 2px no-repeat;
}

.apps .active {
    background: linear-gradient(#0078d7, #0078d7) bottom / 100% 2px no-repeat #eef4f7;
}

.tray {
    display: flex;
    margin-left: auto;
}

.tray button {
    width: 24px;
}

.tray .weather {
    width: auto;
    gap: 8px;
    margin-right: 18px;
    font-size: 13px;
}

.tray .lang {
    width: 36px;
    font-size: 11px;
}

.tray .clock {
    flex-direction: column;
    width: 68px;
    font-size: 11px;
    line-height: 18px;
}

.tray .alerts {
    width: 50px;
}

.tray .show-desktop {
    width: 5px;
    border-left: 1px solid #9fb0b8;
}
```
